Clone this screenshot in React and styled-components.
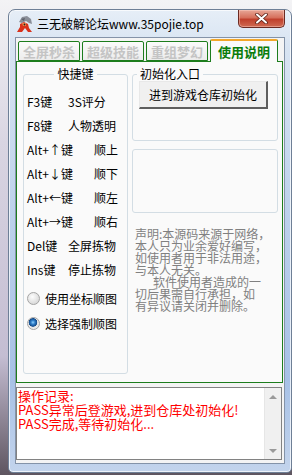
import React from 'react'
import styled, { createGlobalStyle } from 'styled-components'

const GlobalStyle = createGlobalStyle`
  html, body {
    margin: 0;
    padding: 0;
  }
  body {
    font-family: "Noto Sans CJK SC", "Noto Sans", sans-serif;
    font-size: 12px;
    color: #000;
  }
  * {
    box-sizing: border-box;
  }
`

const tabs = ['全屏秒杀', '超级技能', '重组梦幻', '使用说明']

const keys = [
  { key: 'F3键', action: '3S评分' },
  { key: 'F8键', action: '人物透明' },
  { key: 'Alt+↑键', action: '顺上', right: true },
  { key: 'Alt+↓键', action: '顺下', right: true },
  { key: 'Alt+←键', action: '顺左', right: true },
  { key: 'Alt+→键', action: '顺右', right: true },
  { key: 'Del键', action: '全屏拣物' },
  { key: 'Ins键', action: '停止拣物' },
]

// notice is broken by hand to follow the original wrapping
const notice = [
  { text: '声明:本源码来源于网络，' },
  { text: '本人只为业余爱好编写，' },
  { text: '如使用者用于非法用途，' },
  { text: '与本人无关。' },
  { text: '软件使用者造成的一', indent: true },
  { text: '切后果需自行承担，如' },
  { text: '有异议请关闭并删除。' },
]

const logLines = ['操作记录:', 'PASS异常后登游戏,进到仓库处初始化!', 'PASS完成,等待初始化...']

function AppIcon() {
  return (
    <svg width="17" height="18" viewBox="0 0 17 18">
      <path d="M3 7 L6 2 L11 1 L15 4 L16 9 L13 8 L10 6 L6 8 Z" fill="#8a8f99" />
      <path d="M5 4 L9 3 L8 6 Z" fill="#5d626c" />
      <path d="M4 9 L8 7 L12 9 L13 13 L16 17 L12 17 L9 13 L6 17 L1 17 L4 12 Z" fill="#d8321c" />
      <path d="M6 8 L10 8 L10 11 L7 11 Z" fill="#f08a4a" />
      <circle cx="8.5" cy="9.5" r="0.9" fill="#222" />
    </svg>
  )
}

function CloseGlyph() {
  return (
    <svg width="13" height="11" viewBox="0 0 13 11">
      <path d="M2 1.5 L11 9.5 M11 1.5 L2 9.5" stroke="#5a2218" strokeWidth="3.6" strokeLinecap="round" />
      <path d="M2 1.5 L11 9.5 M11 1.5 L2 9.5" stroke="#fff" strokeWidth="2" strokeLinecap="round" />
    </svg>
  )
}

function App() {
  return (
    <Desktop>
      <GlobalStyle />
      <Window>
        <TitleBar>
          <AppIcon />
          <Title>三无破解论坛www.35pojie.top</Title>
          <CloseButton>
            <CloseGlyph />
          </CloseButton>
        </TitleBar>

        <Client>
          <TabBar>
            {tabs.map((t, i) => (
              <Tab key={t} $active={i === tabs.length - 1}>
                {t}
              </Tab>
            ))}
          </TabBar>

          <Page>
            <Group $height={307}>
              <Legend $center>快捷键</Legend>
              <KeyList>
                {keys.map(k => (
                  <KeyRow key={k.key}>
                    <KeyName>{k.key}</KeyName>
                    <KeyAction $right={k.right}>{k.action}</KeyAction>
                  </KeyRow>
                ))}
                <RadioRow $first>
                  <Radio />
                  使用坐标顺图
                </RadioRow>
                <RadioRow>
                  <Radio $checked />
                  选择强制顺图
                </RadioRow>
              </KeyList>
            </Group>

            <RightColumn>
              <Group $height={74}>
                <Legend>初始化入口</Legend>
                <InitButton>进到游戏仓库初始化</InitButton>
              </Group>
              <EmptyBox />
              <Notice>
                {notice.map(n => (
                  <NoticeLine key={n.text} $indent={n.indent}>
                    {n.text}
                  </NoticeLine>
                ))}
              </Notice>
            </RightColumn>
          </Page>

          <LogBox>
            <LogText>
              {logLines.map(l => (
                <LogLine key={l}>{l}</LogLine>
              ))}
            </LogText>
            <ScrollBar>
              <Arrow $up />
              <Arrow />
            </ScrollBar>
          </LogBox>
        </Client>
      </Window>
    </Desktop>
  )
}

const Desktop = styled.div`
  width: 292px;
  height: 475px;
  overflow: hidden;
  padding: 9px 0 0 8px;
  background: linear-gradient(to bottom, #f3f3f5 0%, #d9d5e2 30%, #c4bdd2 75%, #5e5560 100%);
`

const Window = styled.div`
  width: 284px;
  height: 464px;
  display: flex;
  flex-direction: column;
  padding: 0 6px 8px 6px;
  border: 1px solid #6e7f96;
  border-radius: 7px 7px 5px 5px;
  background: linear-gradient(to bottom, #e6eef7 0%, #d8e4f2 8%, #bcd1eb 45%, #a7c1e6 80%, #c3d4ec 100%);
  box-shadow: inset 0 0 0 1px rgba(255, 255, 255, 0.7);
`

const TitleBar = styled.div`
  height: 27px;
  display: flex;
  align-items: center;
  padding-left: 1px;
`

const Title = styled.span`
  margin-left: 4px;
  font-size: 12px;
  color: #000;
  white-space: nowrap;
`

const CloseButton = styled.div`
  align-self: flex-start;
  margin-left: auto;
  width: 47px;
  height: 18px;
  display: flex;
  align-items: center;
  justify-content: center;
  border: 1px solid #6b2a22;
  border-top: none;
  border-radius: 0 0 5px 5px;
  background: linear-gradient(to bottom, #e7a797 0%, #d6705c 45%, #c0402c 55%, #cf6a52 100%);
  box-shadow: inset 0 0 0 1px rgba(255, 210, 200, 0.45);
`

const Client = styled.div`
  flex: 1;
  display: flex;
  flex-direction: column;
  border: 1px solid #8493a8;
  background: #f4f4f4;
`

const TabBar = styled.div`
  height: 23px;
  display: flex;
  align-items: flex-end;
  gap: 2px;
  padding-left: 2px;
`

const Tab = styled.div`
  position: relative;
  z-index: ${p => (p.$active ? 1 : 0)};
  height: ${p => (p.$active ? '23px' : '20px')};
  margin-bottom: ${p => (p.$active ? '-1px' : '0')};
  padding: ${p => (p.$active ? '0 7px' : '0 4px')};
  display: flex;
  align-items: center;
  border: 1px solid #1d7d1d;
  border-bottom: ${p => (p.$active ? 'none' : '1px solid #1d7d1d')};
  border-top: ${p => (p.$active ? '2px solid #f2a72a' : '1px solid #1d7d1d')};
  border-radius: 2px 2px 0 0;
  background: ${p => (p.$active ? '#fafafa' : 'linear-gradient(to bottom, #fbfbfb, #ececec)')};
  color: ${p => (p.$active ? '#0a7d0a' : '#c4c4c4')};
  font-size: 13px;
  font-weight: bold;
  white-space: nowrap;
`

const Page = styled.div`
  height: 322px;
  margin-right: 1px;
  display: grid;
  grid-template-columns: 105px 146px;
  column-gap: 4px;
  align-items: start;
  padding: 5px 0 0 6px;
  border: 1px solid #1d7d1d;
  background: #fafafa;
`

const Group = styled.fieldset`
  height: ${p => p.$height}px;
  margin: 0;
  padding: 0;
  min-width: 0;
  border: 1px solid #d3dde4;
  border-radius: 3px;
`

const Legend = styled.legend`
  margin: ${p => (p.$center ? '0 auto' : '0 0 0 4px')};
  padding: 0 3px;
  font-size: 12px;
  line-height: 14px;
  color: #000;
`

const KeyList = styled.div`
  padding-top: 8px;
`

const KeyRow = styled.div`
  height: 24px;
  display: flex;
  align-items: center;
  padding: 0 9px 0 3px;
  font-size: 12px;
  white-space: nowrap;
`

const KeyName = styled.span`
  min-width: 41px;
`

const KeyAction = styled.span`
  margin-left: ${p => (p.$right ? 'auto' : '0')};
`

const RadioRow = styled.label`
  height: 25px;
  margin-top: ${p => (p.$first ? '5px' : '0')};
  display: flex;
  align-items: center;
  gap: 5px;
  padding-left: 3px;
  font-size: 12px;
  white-space: nowrap;
`

const Radio = styled.span`
  width: 13px;
  height: 13px;
  border-radius: 50%;
  border: 1px solid #a4a4a4;
  background: ${p =>
    p.$checked
      ? 'radial-gradient(circle at 45% 40%, #8fd0ff 0, #2f7ec8 2px, #134a8a 4px, #e6e6e6 4.6px, #f4f4f4 100%)'
      : 'radial-gradient(circle at 40% 35%, #fdfdfd 0, #e0e0e0 60%, #cfcfcf 100%)'};
`

const RightColumn = styled.div`
  display: flex;
  flex-direction: column;
`

const InitButton = styled.div`
  width: 129px;
  height: 28px;
  margin-left: 6px;
  display: flex;
  align-items: center;
  justify-content: center;
  border: 1px solid #9a9a9a;
  border-right: 2px solid #5e5e5e;
  border-bottom: 2px solid #5e5e5e;
  border-top-color: #e8e8e8;
  border-left-color: #e8e8e8;
  background: #f0f0f0;
  font-size: 12px;
  white-space: nowrap;
`

const EmptyBox = styled.div`
  height: 64px;
  margin-top: 8px;
  border: 1px solid #d3dde4;
  border-radius: 3px;
`

const Notice = styled.div`
  margin-top: 15px;
  padding-left: 3px;
  color: #808080;
`

const NoticeLine = styled.div`
  height: 12px;
  padding-left: ${p => (p.$indent ? '18px' : '0')};
  font-size: 12px;
  line-height: 12px;
  white-space: nowrap;
`

const LogBox = styled.div`
  height: 73px;
  margin: 4px 2px 0 0;
  display: flex;
  border: 1px solid #828282;
  background: #fff;
`

const LogText = styled.div`
  flex: 1;
  padding: 1px 0 0 1px;
  color: #ff0000;
`

const LogLine = styled.div`
  height: 14px;
  font-size: 13px;
  line-height: 14px;
  white-space: nowrap;
`

const ScrollBar = styled.div`
  width: 17px;
  display: flex;
  flex-direction: column;
  justify-content: space-between;
  align-items: center;
  padding: 7px 0 6px;
  background: #f0f0f0;
  border-left: 1px solid #e6e6e6;
`

const Arrow = styled.span`
  width: 0;
  height: 0;
  border-left: 4px solid transparent;
  border-right: 4px solid transparent;
  border-bottom: ${p => (p.$up ? '4px solid #9a9a9a' : 'none')};
  border-top: ${p => (p.$up ? 'none' : '4px solid #9a9a9a')};
`

export default App
